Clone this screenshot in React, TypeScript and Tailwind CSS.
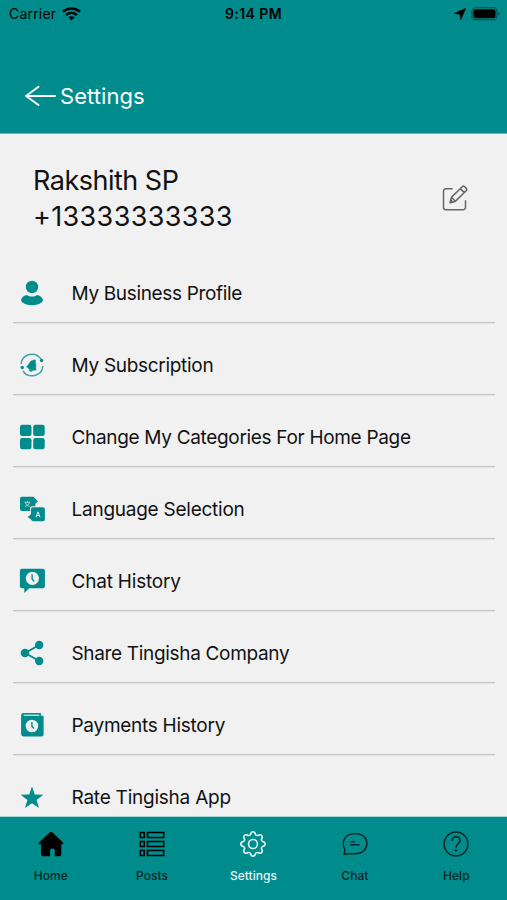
import type { ReactNode } from 'react';
import { BsGear } from 'react-icons/bs';

interface MenuItem {
  label: string;
  icon: ReactNode;
  spacing: string;
}

interface TabItem {
  label: string;
  icon: ReactNode;
  active?: boolean;
}

const UserIcon = () => (
  <svg width="26" height="26" viewBox="0 0 26 26" fill="currentColor">
    <circle cx="13" cy="7" r="6.2" />
    <path d="M2.2 19.5c.8-2.800 3-4 5.800-4.500 3 2 7 2 10 0 2.800.5 5 1.700 5.800 4.500.4 1.500-.6 2.700-2 3.500-5 3-12.600 3-17.600 0-1.400-.8-2.400-2-2-3.500z" />
  </svg>
);

const SubscriptionIcon = () => (
  <svg width="26" height="26" viewBox="0 0 26 26" fill="none" stroke="currentColor">
    <path d="M2 12A11 11 0 0 1 22 7M24 14A11 11 0 0 1 4 19" strokeWidth="1.500" opacity=".75" />
    <circle cx="22.600" cy="8.500" r="1.700" fill="currentColor" stroke="none" />
    <circle cx="3.200" cy="15.500" r="1.700" fill="currentColor" stroke="none" />
    <path d="M7.700 14.200c2.500-.6 2.300-3.700 4.600-5.100 1-.6 1.900-.7 2.900-1.100.9-.4 1.600.3 1.200 1.200-.5 1.100.3 1.900.4 3.300.2 2.200-.6 3.200.4 5.300-3.700 1.200-7.700-.3-9.500-3.600z" fill="currentColor" strokeWidth=".7" strokeLinejoin="round" />
    <path d="M10 17.800c.2 1.700 2.500 2.300 3.600 1z" fill="currentColor" strokeWidth=".5" />
  </svg>
);

const GridIcon = () => (
  <svg width="26" height="26" viewBox="0 0 26 26" fill="currentColor">
    <rect x="1" y=".7" width="11.500" height="11.300" rx="2.200" />
    <rect x="14.200" y=".7" width="11.500" height="11.300" rx="2.200" />
    <rect x="1" y="14" width="11.500" height="11.300" rx="2.200" />
    <rect x="14.200" y="14" width="11.500" height="11.300" rx="2.200" />
  </svg>
);

const LanguageIcon = () => (
  <svg width="26" height="26" viewBox="-.4 0 26 26" fill="currentColor">
    <path d="M2.500.8h11.700l2 2.200 2.300 2.200-2.600 2.600v2.400h-3.200a2 2 0 0 0-2 2v2.800H2.500a1.900 1.900 0 0 1-1.900-1.900V2.700A1.900 1.900 0 0 1 2.500.8z" />
    <path d="M13.700 11.200h9.800a2 2 0 0 1 2 2v10.100a2 2 0 0 1-2 2H13.200l-2.200-2.200-2.700-2.200 3.300-2.700v-5a2 2 0 0 1 2.100-2z" />
    <path d="M5 6.300h6M8 5v1.300M6.200 6.800c.7 1.800 2 3 4 3.700M10 6.800c-.7 1.800-2.200 3-4.500 3.700" stroke="#f1f1f1" strokeWidth=".8" fill="none" opacity=".85" />
    <path d="M16.600 21.200l2-5.400 2 5.400M17.300 19.500h2.700" stroke="#f1f1f1" strokeWidth="1" fill="none" />
  </svg>
);

const ChatHistoryIcon = () => (
  <svg width="26" height="26" viewBox="-.4 0 26 26" fill="currentColor">
    <path d="M2.500.8h21a2 2 0 0 1 2 2v15.500a2 2 0 0 1-2 2H9.800L4.900 25v-4.700H2.500a2 2 0 0 1-2-2V2.800a2 2 0 0 1 2-2z" />
    <circle cx="13" cy="10.300" r="6.600" fill="#f1f1f1" />
    <path d="M12.700 6.200v4.500l2 3" stroke="currentColor" strokeWidth="1.400" fill="none" />
  </svg>
);

const ShareIcon = () => (
  <svg width="26" height="26" viewBox="-.4 0 26 26" fill="currentColor">
    <path d="M19.800 5L5.800 13l14 8" stroke="currentColor" strokeWidth="1.900" fill="none" />
    <circle cx="19.800" cy="5" r="4.200" />
    <circle cx="5.600" cy="13" r="4.300" />
    <circle cx="19.800" cy="21" r="4.200" />
  </svg>
);

const PaymentsIcon = () => (
  <svg width="26" height="26" viewBox="-.4 0 26 26" fill="currentColor">
    <path d="M4 .9h17.500v2.800h1.800a.9.900 0 0 1 .9.900v17.900a1.900 1.900 0 0 1-1.900 1.900H4A2.400 2.400 0 0 1 1.700 22V3.200A2.400 2.400 0 0 1 4 .9z" />
    <path d="M4.300 2.500H20v1.500H4.300z" fill="#f1f1f1" opacity=".75" />
    <circle cx="12.500" cy="14" r="6.300" fill="#f1f1f1" />
    <path d="M12.500 10v4.200l2 2.300" stroke="currentColor" strokeWidth="1.400" fill="none" />
  </svg>
);

const StarIcon = () => (
  <svg width="26" height="26" viewBox="0 0 26 26" fill="currentColor">
    <path d="M13 2.500l2.800 8 8.500.2-6.700 5.200 2.400 8.200-7-4.800-7 4.800 2.400-8.200-6.700-5.200 8.500-.2z" />
  </svg>
);

const HomeIcon = () => (
  <svg width="26" height="26" viewBox="0 0 26 26" fill="black">
    <path d="M11.900 1.300a1.700 1.700 0 0 1 2.300 0l10.600 10c1.200 1.100.6 1.900-.6 1.900h-.9v10.100a1.900 1.900 0 0 1-1.900 1.900h-4.600v-5.600c0-1.200-.7-2.100-2-2.100h-.7c-1.300 0-2 .9-2 2.100v5.600H4.900A1.900 1.900 0 0 1 3 23.300V13.200H1.900c-1.200 0-1.800-.8-.6-1.900z" />
  </svg>
);

const PostsIcon = () => (
  <svg width="26" height="26" viewBox="0 0 26 26" fill="none" stroke="black" strokeWidth="1.600">
    <path d="M1.300 1.500h4v5h-4zM8.500 1.500h16.200v5H8.500zM1.300 10.500h4v5h-4zM8.500 10.500h16.200v5H8.500zM1.300 19.500h4v5h-4zM8.500 19.500h16.200v5H8.500z" />
  </svg>
);

const ChatIcon = () => (
  <svg width="26" height="26" viewBox="0 0 26 26" fill="none" stroke="currentColor" strokeWidth="1.400" strokeLinejoin="round">
    <path d="M1.700 23.200c1-1.600 1.400-3.200.9-4.900C.7 13.700 1 9.500 3.400 6.500 5.600 3.700 8.700 2.600 13 2.600c7.500 0 11.900 4.100 11.900 10s-4.400 10.100-11.900 10.100c-2.500 0-5-.1-6.200.1-1.800.2-3.300.5-5.100.4z" />
    <path d="M8.300 10.900h5M8.300 13.800h9.400" />
  </svg>
);

const HelpIcon = () => (
  <svg width="26" height="26" viewBox="0 0 26 26" fill="none" stroke="currentColor" strokeWidth="1.500">
    <circle cx="13" cy="13" r="11.900" />
    <path d="M9.200 9.700c0-2.600 1.600-4 3.900-4s3.900 1.500 3.900 3.700c0 3.200-3.900 3.400-3.900 7" />
    <circle cx="13" cy="19.300" r="1.200" fill="currentColor" stroke="none" />
  </svg>
);

const menuItems: MenuItem[] = [
  { label: 'My Business Profile', icon: <UserIcon />, spacing: 'tracking-[-0.34px]' },
  { label: 'My Subscription', icon: <SubscriptionIcon />, spacing: 'tracking-[-0.3px]' },
  { label: 'Change My Categories For Home Page', icon: <GridIcon />, spacing: 'tracking-[-0.32px]' },
  { label: 'Language Selection', icon: <LanguageIcon />, spacing: 'tracking-[-0.25px]' },
  { label: 'Chat History', icon: <ChatHistoryIcon />, spacing: 'tracking-[-0.2px]' },
  { label: 'Share Tingisha Company', icon: <ShareIcon />, spacing: 'tracking-[-0.33px]' },
  { label: 'Payments History', icon: <PaymentsIcon />, spacing: 'tracking-[-0.27px]' },
  { label: 'Rate Tingisha App', icon: <StarIcon />, spacing: 'tracking-[-0.23px]' }
];

const tabs: TabItem[] = [
  { label: 'Home', icon: <HomeIcon /> },
  { label: 'Posts', icon: <PostsIcon /> },
  { label: 'Settings', icon: <BsGear size={26} />, active: true },
  { label: 'Chat', icon: <ChatIcon /> },
  { label: 'Help', icon: <HelpIcon /> }
];

function StatusBar() {
  return (
    <div className="grid h-7 grid-cols-3 items-center px-[7px] text-black">
      <div className="flex items-center gap-[6px] pl-[2px] text-sm tracking-[0.2px]">
        <span>Carrier</span>
        <svg width="19" height="15" viewBox="0 0 19 15" fill="none" stroke="currentColor" strokeWidth="2.500">
          <path d="M1 4.600c4.900-4.300 12.100-4.300 17 0M4 8c3.200-2.700 7.800-2.700 11 0" />
          <path d="M9.500 13.500l-3.100-3.200c1.700-1.500 4.500-1.500 6.200 0z" fill="currentColor" stroke="none" />
        </svg>
      </div>
      <div className="text-center text-sm font-semibold tracking-[0.4px]">9:14 PM</div>
      <div className="flex items-center justify-end gap-[5px]">
        <svg width="12" height="12" viewBox="0 0 12 12" fill="currentColor">
          <path d="M11.500.5L6.700 11.500l-.6-5.400L.6 5.400z" stroke="currentColor" strokeWidth=".9" strokeLinejoin="round" />
        </svg>
        <svg width="29" height="14" viewBox="0 0 29 14">
          <rect x="1" y=".7" width="25" height="12" rx="3.500" fill="none" stroke="black" strokeOpacity=".38" strokeWidth="1.300" />
          <rect x="2.500" y="2.200" width="22" height="9" rx="2" />
          <path d="M27.200 5c1.800.7 1.800 3 0 3.700z" opacity=".4" />
        </svg>
      </div>
    </div>
  );
}

export default function App() {
  return (
    <div className="flex h-[900px] w-[507px] flex-col overflow-hidden bg-[#f1f1f1] font-['Inter','Liberation_Sans',sans-serif] text-[#111]">
      <header className="flex h-[134px] shrink-0 flex-col border-b border-[#6bbab9] bg-[#008c8c]">
        <StatusBar />
        <div className="mt-[50px] flex h-9 items-center gap-[3px] pl-[25px] text-white">
          <svg width="32" height="22" viewBox="0 0 32 22" fill="none" stroke="currentColor" strokeWidth="1.900" strokeLinecap="round" strokeLinejoin="round">
            <path d="M30 11H1M13.500 1.800L1 11l12.500 9" />
          </svg>
          <h1 className="pt-px text-[22px] tracking-[0.05px]">Settings</h1>
        </div>
      </header>

      <main className="flex min-h-0 flex-1 flex-col overflow-hidden">
        <section className="flex h-[117px] shrink-0 items-start justify-between pl-[33px] pr-[39px] pt-7">
          <div className="text-[27px] leading-[37px]">
            <p className="tracking-[-0.5px]">Rakshith SP</p>
            <p className="-mt-px tracking-[0.35px]">+13333333333</p>
          </div>
          <svg className="mt-[23px]" width="26" height="26" viewBox="0 0 26 26" fill="none" stroke="#666" strokeWidth="1.500" strokeLinejoin="round">
            <path d="M10 3.700H4A2.500 2.500 0 0 0 1.500 6.200v16A2.500 2.500 0 0 0 4 24.700h17a2.500 2.500 0 0 0 2.500-2.500v-6.500" strokeLinecap="round" />
            <path d="M8 17.700l1.400-5.300L20.200 1.700a1.700 1.700 0 0 1 2.400 0l1.600 1.600a1.700 1.700 0 0 1 0 2.400L13.300 16.400zM18.300 3.600l4 4M9.600 12.500l3.700 3.800M8 17.700l1-2.500 1.500 1.600z" />
          </svg>
        </section>

        <ul className="flex shrink-0 flex-col pl-[13px] pr-[12px]">
          {menuItems.map((item) => (
            <li key={item.label} className="flex h-[72px] items-center border-b border-[#c6c6c6] pl-[6px] pt-[13px] shadow-[0_1px_0_#e2e2e2]">
              <span className="text-[#008c8c]">{item.icon}</span>
              <span className={`ml-[26.5px] whitespace-nowrap pt-[2px] text-[19px] ${item.spacing}`}>{item.label}</span>
            </li>
          ))}
        </ul>
      </main>

      <nav className="grid h-[83px] shrink-0 grid-cols-5 bg-[#008c8c] shadow-[0_-1px_0_#a5d5d5]">
        {tabs.map((tab) => (
          <button
            key={tab.label}
            className={`flex flex-col items-center pt-[14px] text-xs font-medium tracking-[0.05px] ${tab.active ? 'text-[#e4f6f6]' : 'text-[#062424]'}`}
          >
            {tab.icon}
            <span className="mt-[11px]">{tab.label}</span>
          </button>
        ))}
      </nav>
    </div>
  );
}
